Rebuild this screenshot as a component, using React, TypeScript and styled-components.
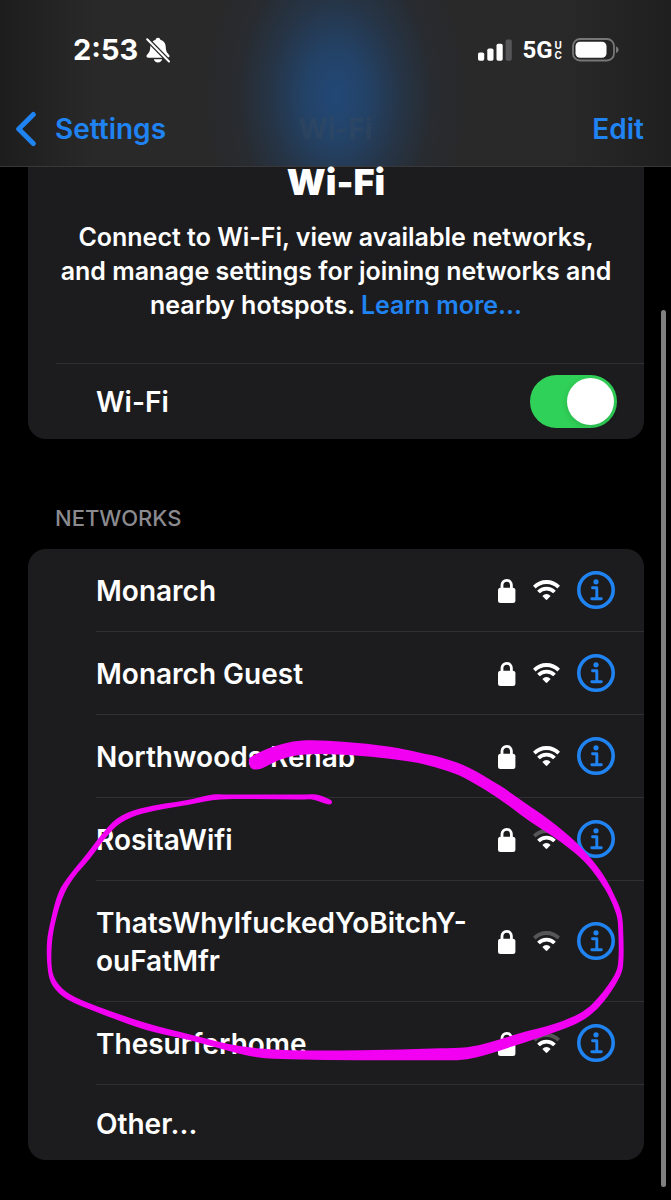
import React, { useState } from "react";
import styled, { createGlobalStyle } from "styled-components";

const blue = "#2083f2";

const GlobalStyle = createGlobalStyle`
  *, *::before, *::after { box-sizing: border-box; }
  html, body { margin: 0; background: #000; }
  body {
    font-family: Inter, "Liberation Sans", sans-serif;
    color: #fff;
  }
  button { font: inherit; border: 0; padding: 0; background: none; cursor: pointer; }
  svg { display: block; flex: none; }
`;

const Screen = styled.div`
  min-height: 100vh;
  background: #000;
`;

const Header = styled.header`
  height: 167px;
  border-bottom: 1px solid #38383a;
  background:
    radial-gradient(ellipse 130px 190px at 50% 96px, #224877 0%, rgba(34, 70, 112, 0.85) 25%, rgba(35, 62, 94, 0.55) 50%, rgba(37, 52, 70, 0.22) 75%, rgba(41, 41, 42, 0) 100%),
    linear-gradient(90deg, #1d1d1d 0%, #29292a 14%, #29292a 84%, #1f1f1f 100%);
`;

const StatusBar = styled.div`
  display: flex;
  align-items: center;
  justify-content: space-between;
  height: 100px;
  padding: 0 52px 0 73px;
`;

const StatusGroup = styled.div<{ $gap: number }>`
  display: flex;
  align-items: center;
  gap: ${(p) => p.$gap}px;
`;

const Time = styled.time`
  font-size: 29px;
  line-height: 34px;
  font-weight: 700;
`;

const Carrier = styled.span`
  display: flex;
  align-items: center;
  gap: 2px;
  font-family: Roboto, sans-serif;
  font-weight: 700;
  font-size: 24px;
  line-height: 24px;
`;

const CarrierSuffix = styled.span`
  display: flex;
  flex-direction: column;
  font-family: Inter, sans-serif;
  font-size: 10px;
  line-height: 10px;
`;

const NavBar = styled.nav`
  display: grid;
  grid-template-columns: 1fr auto 1fr;
  align-items: center;
  height: 58px;
  padding: 0 15px;
  font-size: 28px;
  line-height: 34px;
`;

const BackButton = styled.button`
  display: flex;
  align-items: center;
  justify-self: start;
  gap: 18px;
  color: ${blue};
  font-weight: 600;
`;

const NavTitle = styled.span`
  color: rgba(58, 74, 94, 0.4);
  font-weight: 700;
`;

const EditButton = styled.button`
  justify-self: end;
  padding-right: 12px;
  color: ${blue};
  font-weight: 600;
`;

const Content = styled.main`
  padding: 0 27px 40px 28px;
`;

const IntroCard = styled.section`
  border-radius: 0 0 18px 18px;
  background: #1c1c1e;
`;

const Title = styled.h1`
  margin: 0;
  font-size: 36px;
  line-height: 30px;
  font-weight: 900;
  text-align: center;
`;

const Description = styled.p`
  margin: 0;
  padding: 23px 28px 41px;
  font-size: 25px;
  line-height: 34px;
  font-weight: 600;
  text-align: center;
`;

const Link = styled.a`
  color: ${blue};
  text-decoration: none;
`;

const ToggleRow = styled.label`
  display: flex;
  align-items: center;
  justify-content: space-between;
  height: 76px;
  margin-left: 28px;
  padding: 0 27px 0 40px;
  border-top: 1px solid #303032;
  font-size: 28px;
  line-height: 38px;
  font-weight: 600;
`;

const Switch = styled.input`
  appearance: none;
  display: flex;
  align-items: center;
  width: 87px;
  height: 53px;
  margin: 0;
  padding: 3px;
  border-radius: 27px;
  background: #39393d;
  &:checked {
    justify-content: flex-end;
    background: #30d158;
  }
  &::before {
    content: "";
    width: 47px;
    height: 47px;
    border-radius: 50%;
    background: #fff;
    box-shadow: 0 2px 6px rgba(0, 0, 0, 0.15);
  }
`;

const SectionLabel = styled.h2`
  margin: 0;
  padding: 65px 27px 17px;
  color: #8a8a8f;
  font-size: 22px;
  line-height: 28px;
  font-weight: 500;
`;

const NetworkCard = styled.section`
  position: relative;
  border-radius: 18px;
  background: #1c1c1e;
`;

const List = styled.ul`
  margin: 0;
  padding: 0 0 0 68px;
  list-style: none;
`;

const Row = styled.li`
  display: flex;
  align-items: center;
  justify-content: space-between;
  gap: 20px;
  padding: 21px 29px 21px 0;
  border-bottom: 1px solid #303032;
  &:last-child {
    padding: 18px 0 17px;
    border-bottom: 0;
  }
`;

const NetworkName = styled.button`
  flex: 1;
  min-width: 0;
  padding-top: 2px;
  color: #fff;
  font-size: 28px;
  line-height: 38px;
  font-weight: 600;
  text-align: left;
`;

const RowIcons = styled.div`
  display: flex;
  align-items: center;
  gap: 17px;
`;

const InfoButton = styled.button`
  width: 38px;
  height: 38px;
`;

const Ink = styled.svg`
  position: absolute;
  inset: 0;
  width: 100%;
  height: 100%;
  pointer-events: none;
`;

const ScrollThumb = styled.div`
  position: fixed;
  top: 310px;
  right: 5px;
  bottom: 13px;
  width: 5px;
  border-radius: 3px;
  background: #808080;
`;

const BellOffIcon = () => (
  <svg width="24" height="26" viewBox="0 0 24 26" aria-hidden="true">
    <path d="M12 .8c-1.300 0-2.200.8-2.400 1.900C6.300 3.700 4.400 6.300 4.300 9.500c-.1 4-.8 5.600-2.400 7.300C1 17.700.5 18.300.5 19.300c0 .9.700 1.400 1.700 1.400h19.600c1 0 1.700-.5 1.700-1.400 0-1-.5-1.600-1.400-2.500-1.600-1.700-2.300-3.300-2.400-7.300-.1-3.200-2-5.800-5.300-6.800C14.200 1.600 13.300.8 12 .8z" fill="#fff" />
    <path d="M7.800 22.300h8.400c-.4 1.900-2 3.200-4.200 3.200s-3.800-1.300-4.200-3.200z" fill="#fff" />
    <path d="M0 1l24 24.500" stroke="#29292a" strokeWidth="4.600" />
    <path d="M1.200 2.200l21.800 22.300" stroke="#fff" strokeWidth="2" strokeLinecap="round" />
  </svg>
);

const SignalIcon = () => (
  <svg width="34" height="22" viewBox="0 0 34 22" fill="#fff" aria-hidden="true">
    <rect x="0" y="13.500" width="6.200" height="8.200" rx="1.700" />
    <rect x="9.300" y="9.500" width="6.200" height="12.200" rx="1.700" />
    <rect x="18.500" y="4.700" width="6.200" height="17" rx="1.700" />
    <rect x="27.600" y="0.500" width="6.200" height="21.200" rx="1.700" fill="#555557" />
  </svg>
);

const BatteryIcon = () => (
  <svg width="47" height="24" viewBox="0 0 47 24" aria-hidden="true">
    <rect x="1" y="1" width="41" height="21.500" rx="7" fill="none" stroke="#777779" strokeWidth="1.800" />
    <rect x="3.500" y="3.700" width="31" height="16" rx="4.500" fill="#fff" />
    <path d="M44 8.500c1.600.5 2.600 1.700 2.600 3.300s-1 2.800-2.600 3.300z" fill="#777779" />
  </svg>
);

const ChevronIcon = () => (
  <svg width="22" height="36" viewBox="0 0 22 36" aria-hidden="true">
    <path d="M18.300 3.500L3.700 18l14.600 14.500" fill="none" stroke={blue} strokeWidth="5" strokeLinecap="round" strokeLinejoin="round" />
  </svg>
);

const LockIcon = () => (
  <svg width="18" height="26" viewBox="0 -2 18 26" aria-hidden="true">
    <rect x="0" y="8.700" width="17.400" height="15.300" rx="2.500" fill="#fff" />
    <path d="M4 11V6C4 3.200 6 1.400 8.700 1.400s4.700 1.800 4.700 4.600V11" fill="none" stroke="#fff" strokeWidth="2.800" />
  </svg>
);

const WifiIcon = ({ weak }: { weak?: boolean }) => (
  <svg width="27" height="22" viewBox="0 -1 27 22" fill="none" stroke="#fff" strokeWidth="3.800" aria-hidden="true">
    <path d="M1.300 7.100A17.200 17.200 0 0 1 25.700 7.100" stroke={weak ? "#565658" : "#fff"} />
    <path d="M5.500 12A11.200 11.200 0 0 1 21.500 12" />
    <path d="M9.400 15.900C11.700 13.200 15.300 13.200 17.600 15.900L14.300 19.600Q13.500 20.400 12.700 19.600Z" fill="#fff" stroke="none" />
  </svg>
);

const InfoIcon = () => (
  <svg width="38" height="38" viewBox="0 0 38 38" fill="none" stroke={blue} aria-hidden="true">
    <circle cx="19" cy="19" r="17.200" strokeWidth="3.600" />
    <circle cx="19" cy="10.800" r="2.600" fill={blue} stroke="none" />
    <path d="M15.500 16.800H19.800V27.800M14.800 27.800H24.300" strokeWidth="2.900" strokeLinecap="round" strokeLinejoin="round" />
  </svg>
);

type Point = [number, number];

const inkOutline: Point[] = [
  [250, 758], [273, 747], [300, 741], [343, 742], [390, 747], [420, 753], [442, 758], [467, 767],
  [500, 786], [523, 802], [550, 821], [573, 840], [590, 858], [603, 875], [613, 893], [621, 912],
  [623, 927], [623, 967], [618, 981], [604, 1002], [590, 1016], [573, 1026], [540, 1038],
  [507, 1049], [477, 1058], [457, 1061], [440, 1061], [360, 1061], [290, 1060], [257, 1058],
  [230, 1052], [190, 1041], [147, 1031], [97, 1013], [67, 1000], [53, 987], [48, 972], [47, 943],
  [51, 920], [59, 892], [70, 875], [87, 854], [100, 837], [117, 819], [140, 809], [190, 800],
  [213, 795], [230, 795], [300, 795], [316, 795], [330, 800], [332, 803], [329, 805], [312, 800],
  [300, 800], [220, 800], [190, 805], [143, 814], [120, 824], [106, 838], [90, 859], [74, 878],
  [64, 895], [56, 920], [52, 943], [52, 970], [57, 983], [70, 995], [97, 1007], [147, 1024],
  [193, 1036], [230, 1045], [257, 1049], [290, 1051], [360, 1051], [440, 1049], [467, 1048],
  [490, 1043], [523, 1033], [553, 1025], [578, 1015], [593, 1004], [612, 980], [618, 965],
  [618, 925], [616, 914], [609, 897], [600, 882], [587, 865], [573, 852], [553, 837], [530, 822],
  [507, 805], [483, 789], [460, 776], [440, 769], [417, 763], [380, 758], [343, 755], [302, 755],
  [280, 760], [261, 769], [252, 769], [249, 763],
];

// Closed Catmull-Rom curve through the points, written as cubic segments.
function smoothPath(points: Point[]): string {
  const n = points.length;
  let d = `M${points[0][0]} ${points[0][1]}`;
  for (let i = 0; i < n; i++) {
    const a = points[(i - 1 + n) % n];
    const b = points[i];
    const c = points[(i + 1) % n];
    const e = points[(i + 2) % n];
    const reach = Math.hypot(c[0] - b[0], c[1] - b[1]) / 3;
    const inLen = Math.hypot(c[0] - a[0], c[1] - a[1]) || 1;
    const outLen = Math.hypot(e[0] - b[0], e[1] - b[1]) || 1;
    const x1 = b[0] + ((c[0] - a[0]) / inLen) * reach;
    const y1 = b[1] + ((c[1] - a[1]) / inLen) * reach;
    const x2 = c[0] - ((e[0] - b[0]) / outLen) * reach;
    const y2 = c[1] - ((e[1] - b[1]) / outLen) * reach;
    d += `C${x1} ${y1} ${x2} ${y2} ${c[0]} ${c[1]}`;
  }
  return d + "Z";
}

const inkPath = smoothPath(inkOutline);

const networks = [
  { name: "Monarch", weak: false },
  { name: "Monarch Guest", weak: false },
  { name: "Northwoods Rehab", weak: false },
  { name: "RositaWifi", weak: true },
  { name: "ThatsWhyIfuckedYoBitchY-ouFatMfr", weak: true },
  { name: "Thesurferhome", weak: true },
];

export default function App() {
  const [enabled, setEnabled] = useState(true);
  return (
    <Screen>
      <GlobalStyle />
      <Header>
        <StatusBar>
          <StatusGroup $gap={8}>
            <Time>2:53</Time>
            <BellOffIcon />
          </StatusGroup>
          <StatusGroup $gap={10}>
            <SignalIcon />
            <Carrier>
              5G
              <CarrierSuffix>
                <span>U</span>
                <span>C</span>
              </CarrierSuffix>
            </Carrier>
            <BatteryIcon />
          </StatusGroup>
        </StatusBar>
        <NavBar>
          <BackButton type="button">
            <ChevronIcon />
            Settings
          </BackButton>
          <NavTitle>Wi-Fi</NavTitle>
          <EditButton type="button">Edit</EditButton>
        </NavBar>
      </Header>
      <Content>
        <IntroCard>
          <Title>Wi-Fi</Title>
          <Description>
            Connect to Wi-Fi, view available networks, and manage settings for joining networks and
            nearby hotspots. <Link href="#learn-more">Learn more...</Link>
          </Description>
          <ToggleRow>
            Wi-Fi
            <Switch type="checkbox" checked={enabled} onChange={(e) => setEnabled(e.target.checked)} />
          </ToggleRow>
        </IntroCard>
        <SectionLabel>NETWORKS</SectionLabel>
        <NetworkCard>
          <List>
            {networks.map((network) => (
              <Row key={network.name}>
                <NetworkName type="button">{network.name}</NetworkName>
                <RowIcons>
                  <LockIcon />
                  <WifiIcon weak={network.weak} />
                  <InfoButton type="button" aria-label={`About ${network.name}`}>
                    <InfoIcon />
                  </InfoButton>
                </RowIcons>
              </Row>
            ))}
            <Row>
              <NetworkName type="button">Other...</NetworkName>
            </Row>
          </List>
          <Ink viewBox="28 549 616 612" preserveAspectRatio="none" aria-hidden="true">
            <path d={inkPath} fill="#f200f2" />
          </Ink>
        </NetworkCard>
      </Content>
      <ScrollThumb />
    </Screen>
  );
}
